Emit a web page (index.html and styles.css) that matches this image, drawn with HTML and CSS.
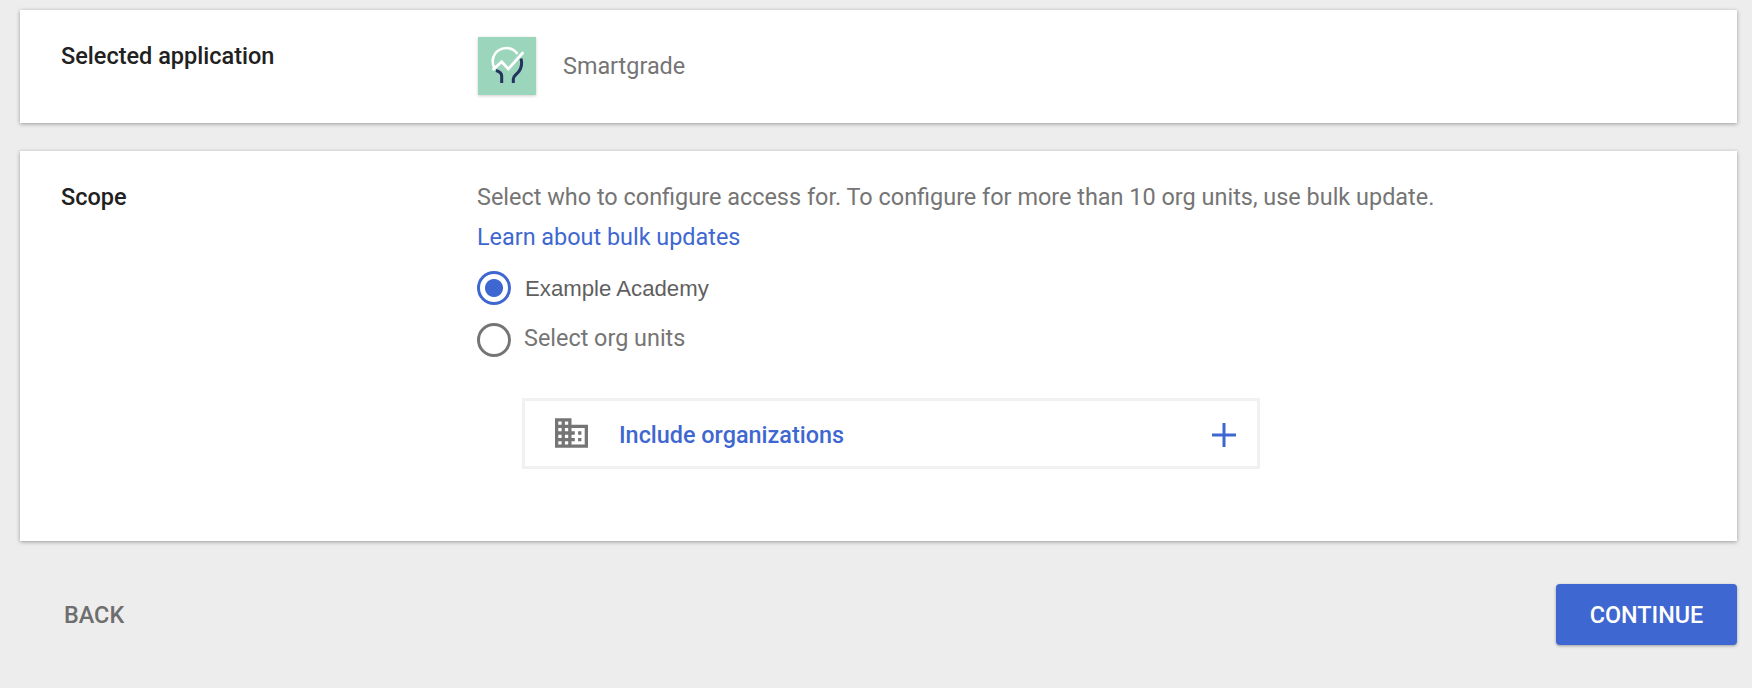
FILE: index.html
```html
<!DOCTYPE html>
<html lang="en">
<head>
<meta charset="utf-8">
<title>Selected application</title>
<link rel="stylesheet" href="styles.css">
</head>
<body>
<main class="page">
  <section class="card card-app">
    <h2 class="label">Selected application</h2>
    <div class="app">
      <svg class="app-logo" viewBox="0 0 58 58" aria-hidden="true">
        <rect width="58" height="58" fill="#9bd5bb"/>
        <path d="M18 33.500c3.500 1 5.700 3 5.700 5.500v7M43 21.500c1.500 6 .5 10.500-3.500 14.500-2.700 2.700-4.200 3.500-4.200 6v4" fill="none" stroke="#24325f" stroke-width="3"/>
        <path d="M17 32A13.500 13.500 0 0 1 39.500 17" fill="none" stroke="#fff" stroke-width="2.600"/>
        <path d="M14.700 33l9-8.300 6.600 7.300 15-16.700" fill="none" stroke="#fff" stroke-width="2.800"/>
      </svg>
      <span class="app-name">Smartgrade</span>
    </div>
  </section>
  <section class="card card-scope">
    <h2 class="label">Scope</h2>
    <div class="scope">
      <p class="hint">Select who to configure access for. To configure for more than 10 org units, use bulk update.</p>
      <a class="link" href="#">Learn about bulk updates</a>
      <div class="radios">
        <div class="radio-row radio-row-on">
          <span class="radio radio-on"></span>
          <span class="radio-text">Example Academy</span>
        </div>
        <div class="radio-row">
          <span class="radio"></span>
          <span class="radio-text radio-text-off">Select org units</span>
        </div>
      </div>
      <div class="org-box">
        <svg class="org-icon" viewBox="2 3 20 18" aria-hidden="true">
          <path fill="#757575" d="M12 7V3H2v18h20V7H12zM6 19H4v-2h2v2zm0-4H4v-2h2v2zm0-4H4V9h2v2zm0-4H4V5h2v2zm4 12H8v-2h2v2zm0-4H8v-2h2v2zm0-4H8V9h2v2zm0-4H8V5h2v2zm10 12h-8v-2h2v-2h-2v-2h2v-2h-2V9h8v10zm-2-8h-2v2h2v-2zm0 4h-2v2h2v-2z"/>
        </svg>
        <span class="org-text">Include organizations</span>
        <svg class="org-plus" viewBox="0 0 24 24" aria-hidden="true">
          <path d="M12 0v24M0 12h24" fill="none" stroke="#3f67d1" stroke-width="3"/>
        </svg>
      </div>
    </div>
  </section>
  <footer class="actions">
    <button class="btn btn-back" type="button">BACK</button>
    <button class="btn btn-continue" type="button">CONTINUE</button>
  </footer>
</main>
</body>
</html>
```
FILE: styles.css
```css
* { box-sizing: border-box; }
html, body { margin: 0; height: 100%; }
body {
  background: #ededed;
  font-family: Roboto, "Liberation Sans", sans-serif;
  overflow: hidden;
}
.page { padding: 10px 15px 0 20px; }
.card {
  display: grid;
  grid-template-columns: 416px 1fr;
  background: #fff;
  box-shadow: 0 1px 4px rgba(0, 0, 0, 0.35);
  padding-left: 41px;
}
.card-app { height: 113px; padding-top: 33px; }
.card-scope { height: 390px; margin-top: 28px; padding-top: 33px; }
.label {
  margin: 0;
  font-size: 23.500px;
  line-height: 26px;
  font-weight: 500;
  color: #212121;
}
.app { display: flex; align-items: center; margin-top: -6px; height: 58px; padding-left: 1px; }
.app-logo { width: 58px; height: 58px; box-shadow: 0 1px 3px rgba(0, 0, 0, 0.2); }
.app-name { margin-left: 27px; font-size: 23.400px; color: #757575; }
.hint { margin: 0; font-size: 23.450px; line-height: 26px; color: #757575; }
.link { display: block; margin-top: 14px; font-size: 23.400px; line-height: 26px; color: #3f67d1; text-decoration: none; }
.radios { margin-top: 21px; display: flex; flex-direction: column; gap: 19px; }
.radio-row { display: flex; align-items: center; height: 33px; }
.radio {
  width: 34px;
  height: 34px;
  border: 3px solid #757575;
  border-radius: 50%;
  flex: none;
}
.radio-on { border-color: #3f67d1; background: radial-gradient(circle, #3f67d1 0 8.500px, #fff 9.500px); }
.radio-text { margin-left: 13px; font: 22.200px "Liberation Sans", Arial, sans-serif; color: #5f5f5f; }
.radio-row-on .radio-text { margin-left: 14px; margin-top: 2px; }
.radio-text-off { font-family: Roboto, sans-serif; font-size: 23.400px; color: #757575; margin-top: -4px; }
.org-box {
  display: flex;
  align-items: center;
  width: 738px;
  height: 71px;
  margin: 42px 0 0 45px;
  padding: 2px 21px 0 30px;
  border: 3px solid #f1f1f1;
}
.org-icon { width: 33px; height: 30px; flex: none; margin-top: -4px; }
.org-text { margin-left: 31px; font-size: 23.400px; font-weight: 500; color: #3f67d1; flex: 1; }
.org-plus { width: 24px; height: 24px; flex: none; }
.actions {
  display: flex;
  justify-content: space-between;
  align-items: center;
  margin-top: 43px;
  height: 61px;
}
.btn {
  border: 0;
  font-family: Roboto, sans-serif;
  font-size: 23.400px;
  font-weight: 500;
  height: 61px;
}
.btn-back { background: none; color: #6e6e6e; padding: 0 44px 0 44px; }
.btn-continue { width: 181px; background: #3f67d1; color: #fff; border-radius: 4px; box-shadow: 0 1px 3px rgba(0, 0, 0, 0.35); }
```
